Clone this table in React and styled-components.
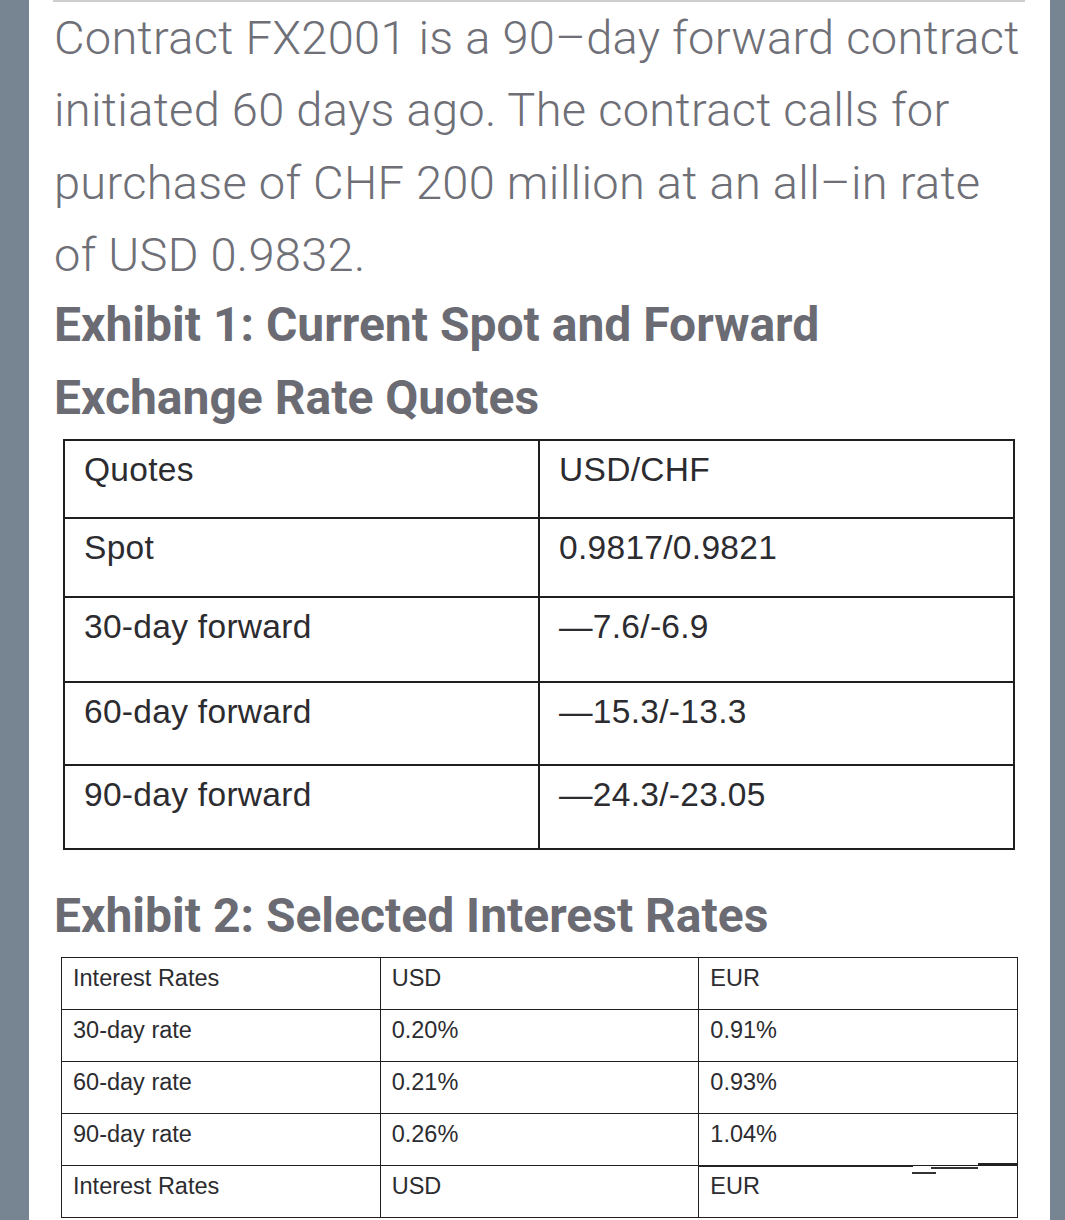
import React from 'react';
import styled, { createGlobalStyle } from 'styled-components';

const Global = createGlobalStyle`
  html, body {
    margin: 0;
    padding: 0;
    background: #778593;
  }
`;

const quotes = [
  { label: 'Quotes', value: 'USD/CHF', h: 78 },
  { label: 'Spot', value: '0.9817/0.9821', h: 79 },
  { label: '30-day forward', value: '\u20147.6/-6.9', h: 85 },
  { label: '60-day forward', value: '\u201415.3/-13.3', h: 83 },
  { label: '90-day forward', value: '\u201424.3/-23.05', h: 84 },
];

const rates = [
  ['Interest Rates', 'USD', 'EUR'],
  ['30-day rate', '0.20%', '0.91%'],
  ['60-day rate', '0.21%', '0.93%'],
  ['90-day rate', '0.26%', '1.04%'],
  ['Interest Rates', 'USD', 'EUR'],
];

const App = () => {
  return (
    <>
      <Global />
      <Page>
        <Card>
          <Rule />
          <Para>
            Contract FX2001 is a 90–day forward contract initiated 60 days ago. The contract calls for
            purchase of CHF 200 million at an all–in rate of USD 0.9832.
          </Para>
          <Heading $top={-3}>Exhibit 1: Current Spot and Forward Exchange Rate Quotes</Heading>
          <QuoteTable>
            <tbody>
              {quotes.map((q) => (
                <QuoteRow key={q.label} $h={q.h}>
                  <QuoteCell>{q.label}</QuoteCell>
                  <QuoteCell>{q.value}</QuoteCell>
                </QuoteRow>
              ))}
            </tbody>
          </QuoteTable>
          <Heading $top={29}>Exhibit 2: Selected Interest Rates</Heading>
          <RateTable>
            <tbody>
              {rates.map((r, i) => (
                <tr key={i}>
                  {r.map((c, j) => {
                    const glitch = i === rates.length - 1 && j === 2;
                    return (
                      <RateCell key={j} $glitch={glitch}>
                        {c}
                        {glitch && (
                          <Glitch width="320" height="14" viewBox="0 0 320 14">
                            <path d="M0 3 H215" stroke="#222" strokeWidth="2" fill="none" />
                            <path d="M214 10 H238" stroke="#333" strokeWidth="2" fill="none" />
                            <path d="M233 5 H280" stroke="#333" strokeWidth="2" fill="none" />
                            <path d="M280 1 H320" stroke="#222" strokeWidth="2" fill="none" />
                          </Glitch>
                        )}
                      </RateCell>
                    );
                  })}
                </tr>
              ))}
            </tbody>
          </RateTable>
        </Card>
      </Page>
    </>
  );
};

export default App;

const Page = styled.div`
  min-height: 1220px;
  padding-left: 29px;
  padding-right: 15px;
  background: #778593;
`;

const Card = styled.div`
  background: #ffffff;
  min-height: 1220px;
  padding: 0 25px 0 24px;
  box-sizing: border-box;
`;

const Rule = styled.div`
  height: 2px;
  background: #cfcfd1;
`;

const Para = styled.p`
  margin: 0;
  padding-left: 1px;
  font-family: Roboto, "Liberation Sans", sans-serif;
  font-weight: 300;
  font-size: 47px;
  letter-spacing: 0.3px;
  line-height: 72.3px;
  color: #6f6f77;
`;

const Heading = styled.h2`
  margin: ${(p) => p.$top || 0}px 0 0 0;
  padding-left: 1px;
  font-family: Roboto, "Liberation Sans", sans-serif;
  font-weight: 700;
  font-size: 48px;
  line-height: 73px;
  color: #6b6b73;
`;

const QuoteTable = styled.table`
  border-collapse: collapse;
  margin: 5px 10px 0 10px;
  width: 952px;
  table-layout: fixed;
  font-family: "Liberation Sans", Arial, sans-serif;
  color: #2c2c30;
`;

const QuoteRow = styled.tr`
  height: ${(p) => p.$h}px;
`;

const QuoteCell = styled.td`
  border: 2px solid #1f1f1f;
  vertical-align: top;
  padding: 10px 20px 0 19px;
  font-size: 33.5px;
  line-height: 38px;
  letter-spacing: 0.3px;
`;

const RateTable = styled.table`
  border-collapse: collapse;
  margin: 5px 6px 0 8px;
  width: 957px;
  table-layout: fixed;
  font-family: "Liberation Sans", Arial, sans-serif;
  color: #2c2c30;
`;

const RateCell = styled.td`
  position: relative;
  height: 52px;
  box-sizing: border-box;
  border: 1.5px solid #1f1f1f;
  ${(p) => (p.$glitch ? 'border-top-color: transparent;' : '')}
  vertical-align: top;
  padding: 6px 10px 0 11px;
  font-size: 23.5px;
  line-height: 28px;
`;

const Glitch = styled.svg`
  position: absolute;
  left: -1px;
  top: -3px;
`;
